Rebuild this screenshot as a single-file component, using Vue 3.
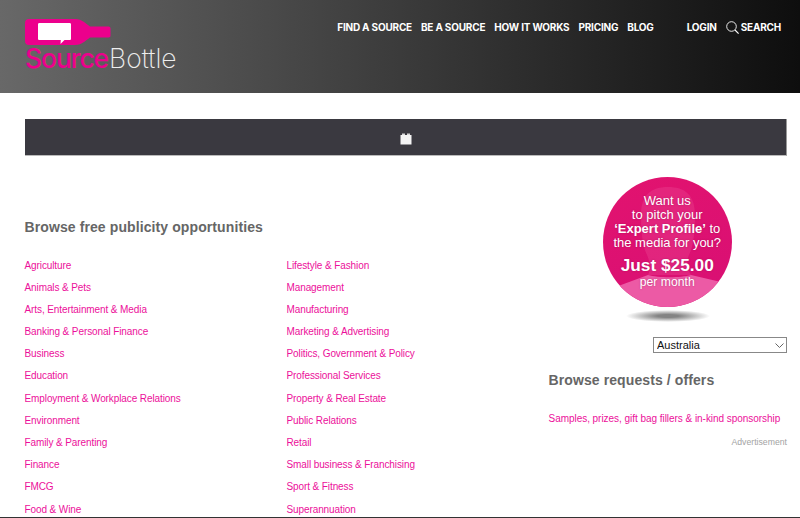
<script setup>
const leftLinks = [
  "Agriculture",
  "Animals & Pets",
  "Arts, Entertainment & Media",
  "Banking & Personal Finance",
  "Business",
  "Education",
  "Employment & Workplace Relations",
  "Environment",
  "Family & Parenting",
  "Finance",
  "FMCG",
  "Food & Wine",
];

const rightLinks = [
  "Lifestyle & Fashion",
  "Management",
  "Manufacturing",
  "Marketing & Advertising",
  "Politics, Government & Policy",
  "Professional Services",
  "Property & Real Estate",
  "Public Relations",
  "Retail",
  "Small business & Franchising",
  "Sport & Fitness",
  "Superannuation",
];

const mainNav = ["FIND A SOURCE", "BE A SOURCE", "HOW IT WORKS", "PRICING", "BLOG"];
</script>

<template>
  <div class="page">
    <header class="site-header">
      <a class="logo" href="#">
        <svg class="bottle" width="86" height="28" viewBox="0 0 86 28">
          <path
            d="M4 0H50C54 0 56 1 59 3L65 7.500H83.500C85 7.500 85.500 8.500 85.500 9.500V16.500C85.500 17.500 85 18.500 83.500 18.500H65L59 23C56 25 54 26 50 26H4C1.500 26 0 24.500 0 22V4C0 1.500 1.500 0 4 0Z"
            fill="#ec008c"
          />
          <path
            d="M14.500 4H44.500C45.500 4 46 4.500 46 5.500V19.500C46 20.500 45.500 21 44.500 21H39.500L35.500 25L35.800 21H14.500C13.500 21 13 20.500 13 19.500V5.500C13 4.500 13.500 4 14.500 4Z"
            fill="#fff"
          />
        </svg>
        <span class="wordmark"><span class="source">Source</span><span class="word-bottle">Bottle</span></span>
      </a>
      <nav class="nav">
        <a v-for="item in mainNav" :key="item" href="#">{{ item }}</a>
        <a class="login" href="#">LOGIN</a>
        <a class="search" href="#">
          <svg width="13" height="13" viewBox="0 0 13 13" fill="none" stroke="#fff">
            <circle cx="5.500" cy="5.500" r="4.800" stroke-width="0.900" />
            <path d="M9 9L12.600 12.600" stroke-width="1.100" />
          </svg>
          SEARCH
        </a>
      </nav>
    </header>

    <div class="notice-bar">
      <svg width="12" height="12" viewBox="0 0 12 12">
        <path d="M0.500 2H11.500V11.500H0.500Z" fill="#f4f4f4" />
        <path d="M2 0.500H5V2H2ZM7 0.500H10V2H7Z" fill="#d8d8d8" />
      </svg>
    </div>

    <main class="content">
      <section class="browse">
        <h2>Browse free publicity opportunities</h2>
        <div class="link-columns">
          <ul>
            <li v-for="link in leftLinks" :key="link"><a href="#">{{ link }}</a></li>
          </ul>
          <ul>
            <li v-for="link in rightLinks" :key="link"><a href="#">{{ link }}</a></li>
          </ul>
        </div>
      </section>

      <aside class="sidebar">
        <div class="promo">
          <div class="promo-circle">
            <svg class="silhouette" width="130" height="130" viewBox="0 0 130 130">
              <path d="M45 98C48 92 47 85 44 78C39 68 38 52 38 38C38 18 48 10 65 10C82 10 92 18 92 38C92 52 91 68 86 78C83 85 84 92 88 98Z" fill="#ec4a96" opacity="0.35" />
              <path d="M0 116L18 108L45 98C55 101 78 101 88 98L118 105L130 110V130H0Z" fill="#ec5aa5" />
            </svg>
            <div class="promo-text">
              <p>Want us</p>
              <p>to pitch your</p>
              <p><b>‘Expert Profile’</b> to</p>
              <p>the media for you?</p>
              <p class="price">Just $25.00</p>
              <p class="per">per month</p>
            </div>
          </div>
          <div class="promo-shadow"></div>
        </div>

        <div class="country">
          <select>
            <option>Australia</option>
          </select>
        </div>

        <h2>Browse requests / offers</h2>
        <a class="offer" href="#">Samples, prizes, gift bag fillers &amp; in-kind sponsorship</a>
        <div class="ad-label">Advertisement</div>
      </aside>
    </main>
  </div>
</template>

<style>
html,
body {
  margin: 0;
  background: #fff;
}
</style>

<style scoped>
* {
  box-sizing: border-box;
}
.page {
  height: 518px;
  display: flex;
  flex-direction: column;
  overflow: hidden;
  border-bottom: 1px solid #333;
  font-family: "Liberation Sans", Arial, sans-serif;
}
a {
  text-decoration: none;
}
.site-header {
  flex: none;
  height: 93px;
  padding: 19px 19px 0 25px;
  display: flex;
  justify-content: space-between;
  align-items: flex-start;
  background: linear-gradient(90deg, #686868 0%, #0e0e0e 100%);
}
.logo {
  display: flex;
  flex-direction: column;
}
.bottle {
  display: block;
}
.wordmark {
  display: block;
  margin-top: -1px;
  font-family: Inter, sans-serif;
  font-size: 26.500px;
  line-height: 25px;
  font-weight: 300;
}
.source {
  color: #ec008c;
  font-weight: 500;
  letter-spacing: -1.100px;
}
.word-bottle {
  color: #eee;
  font-weight: 200;
  margin-left: 1px;
}
.nav {
  display: flex;
  align-items: center;
  gap: 9px;
  margin-top: 1px;
  font-family: Inter, sans-serif;
  font-size: 10px;
  font-weight: 700;
  letter-spacing: -0.200px;
  line-height: 14px;
}
.nav a {
  color: #fff;
}
.nav .login {
  margin-left: 24px;
}
.search {
  display: flex;
  align-items: center;
  gap: 2px;
}
.notice-bar {
  flex: none;
  height: 37px;
  margin: 26px 13px 0 25px;
  padding-top: 3px;
  display: flex;
  align-items: center;
  justify-content: center;
  background: #3a3940;
  border-right: 1px solid #999;
  border-bottom: 1px solid #bbb;
}
.content {
  flex: 1;
  min-height: 0;
  padding: 21px 13px 0 24.500px;
  display: flex;
  justify-content: space-between;
}
h2 {
  margin: 0;
  font-size: 14px;
  line-height: 18px;
  font-weight: 700;
  letter-spacing: 0.100px;
  color: #666;
}
.browse {
  padding-top: 41px;
}
.link-columns {
  margin-top: 18.500px;
  display: flex;
}
ul {
  list-style: none;
  margin: 0;
  padding: 0;
  width: 262px;
}
li {
  height: 22.200px;
  font-size: 10px;
  letter-spacing: -0.100px;
  line-height: 22px;
}
li a,
.offer {
  color: #ec0f9a;
}
.sidebar {
  width: 239.500px;
  display: flex;
  flex-direction: column;
}
.promo {
  display: flex;
  flex-direction: column;
  align-items: center;
}
.promo-circle {
  position: relative;
  width: 129px;
  height: 130px;
  margin-right: 1px;
  border-radius: 50%;
  overflow: hidden;
  background: linear-gradient(160deg, #e2136f 0%, #d80f74 100%);
}
.silhouette {
  position: absolute;
  left: 0;
  top: 0;
}
.promo-text {
  position: relative;
  padding-top: 17px;
  text-align: center;
  color: #fff;
  font-size: 13px;
  line-height: 14px;
  text-shadow: 0 0 2px rgba(120, 0, 60, 0.4);
}
.promo-text p {
  margin: 0;
}
.promo-text .price {
  margin-top: 6px;
  font-size: 17.300px;
  line-height: 19px;
  font-weight: 700;
}
.promo-text .per {
  margin-top: 1px;
  font-size: 12.200px;
  line-height: 13px;
}
.promo-shadow {
  width: 84px;
  height: 12px;
  margin-top: 3px;
  border-radius: 50%;
  background: radial-gradient(closest-side, #848484 25%, rgba(150, 150, 150, 0));
}
.country {
  display: flex;
  justify-content: flex-end;
  margin-top: 15px;
}
select {
  appearance: none;
  width: 134px;
  height: 16px;
  padding: 0 0 0 3px;
  font-family: "Liberation Sans", Arial, sans-serif;
  font-size: 11px;
  background: #fff url("data:image/svg+xml,%3Csvg xmlns='http://www.w3.org/2000/svg' width='9' height='5'%3E%3Cpath d='M.5.5l4 4 4-4' fill='none' stroke='%23666'/%3E%3C/svg%3E") no-repeat right 2px center;
  border: 1px solid #888;
  border-radius: 0;
  color: #111;
}
.sidebar h2 {
  margin-top: 18px;
}
.offer {
  margin-top: 23px;
  font-size: 10px;
  letter-spacing: -0.040px;
  line-height: 14px;
}
.ad-label {
  margin-top: 10px;
  text-align: right;
  font-size: 8.700px;
  line-height: 12px;
  color: #a3a3a3;
}
</style>
